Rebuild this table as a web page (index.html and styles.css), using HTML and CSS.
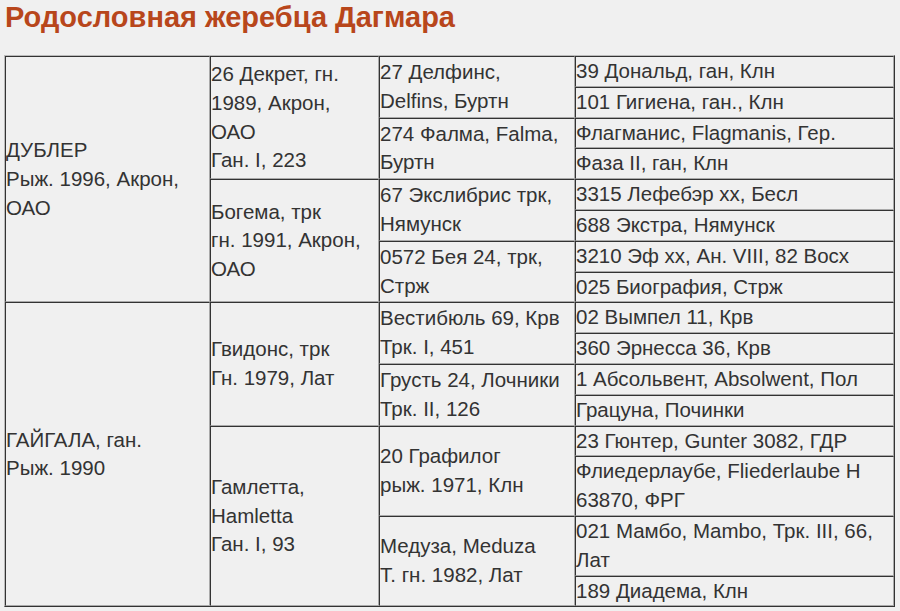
FILE: index.html
```html
<!DOCTYPE html>
<html lang="ru">
<head>
<meta charset="utf-8">
<title>Родословная жеребца Дагмара</title>
<link rel="stylesheet" href="styles.css">
</head>
<body>
<h1 class="title">Родословная жеребца Дагмара</h1>
<table class="pedigree">
<colgroup>
<col class="c1"><col class="c2"><col class="c3"><col class="c4">
</colgroup>
<tbody>
<tr>
<td rowspan="8">ДУБЛЕР<br>Рыж. 1996, Акрон,<br>ОАО</td>
<td rowspan="4">26 Декрет, гн.<br>1989, Акрон,<br>ОАО<br>Ган. I, 223</td>
<td rowspan="2">27 Делфинс,<br>Delfins, Буртн</td>
<td>39 Дональд, ган, Клн</td>
</tr>
<tr><td>101 Гигиена, ган., Клн</td></tr>
<tr>
<td rowspan="2">274 Фалма, Falma,<br>Буртн</td>
<td>Флагманис, Flagmanis, Гер.</td>
</tr>
<tr><td>Фаза II, ган, Клн</td></tr>
<tr>
<td rowspan="4">Богема, трк<br>гн. 1991, Акрон,<br>ОАО</td>
<td rowspan="2">67 Экслибрис трк,<br>Нямунск</td>
<td>3315 Лефебэр хх, Бесл</td>
</tr>
<tr><td>688 Экстра, Нямунск</td></tr>
<tr>
<td rowspan="2">0572 Бея 24, трк,<br>Стрж</td>
<td>3210 Эф хх, Ан. VIII, 82 Восх</td>
</tr>
<tr><td>025 Биография, Стрж</td></tr>
<tr>
<td rowspan="8">ГАЙГАЛА, ган.<br>Рыж. 1990</td>
<td rowspan="4">Гвидонс, трк<br>Гн. 1979, Лат</td>
<td rowspan="2">Вестибюль 69, Крв<br>Трк. I, 451</td>
<td>02 Вымпел 11, Крв</td>
</tr>
<tr><td>360 Эрнесса 36, Крв</td></tr>
<tr>
<td rowspan="2">Грусть 24, Лочники<br>Трк. II, 126</td>
<td>1 Абсольвент, Absolwent, Пол</td>
</tr>
<tr><td>Грацуна, Починки</td></tr>
<tr>
<td rowspan="4">Гамлетта,<br>Hamletta<br>Ган. I, 93</td>
<td rowspan="2">20 Графилог<br>рыж. 1971, Клн</td>
<td>23 Гюнтер, Gunter 3082, ГДР</td>
</tr>
<tr><td>Флиедерлаубе, Fliederlaube H<br>63870, ФРГ</td></tr>
<tr>
<td rowspan="2">Медуза, Meduza<br>Т. гн. 1982, Лат</td>
<td>021 Мамбо, Mambo, Трк. III, 66,<br>Лат</td>
</tr>
<tr><td>189 Диадема, Клн</td></tr>
</tbody>
</table>
</body>
</html>
```
FILE: styles.css
```css
html, body {
  margin: 0;
  padding: 0;
  background: #f0f0f0;
}
body {
  padding: 0 4px;
  font-family: "Liberation Sans", Arial, sans-serif;
  color: #333;
}
.title {
  margin: 0;
  padding-left: 1px;
  font-size: 29px;
  line-height: 34px;
  font-weight: bold;
  color: #b8461b;
}
.pedigree {
  margin-top: 21px;
  width: 891px;
  table-layout: fixed;
  border-collapse: separate;
  border-spacing: 0;
  border: 1px solid;
  border-color: #bbb #333 #333 #bbb;
  font-size: 20.5px;
  line-height: 28.8px;
}
.c1 { width: 205px; }
.c2 { width: 169px; }
.c3 { width: 196px; }
.c4 { width: 319px; }
.pedigree td {
  padding: 0;
  border: 1px solid;
  border-color: #333 #aaa #aaa #333;
  vertical-align: middle;
  white-space: nowrap;
}
```
